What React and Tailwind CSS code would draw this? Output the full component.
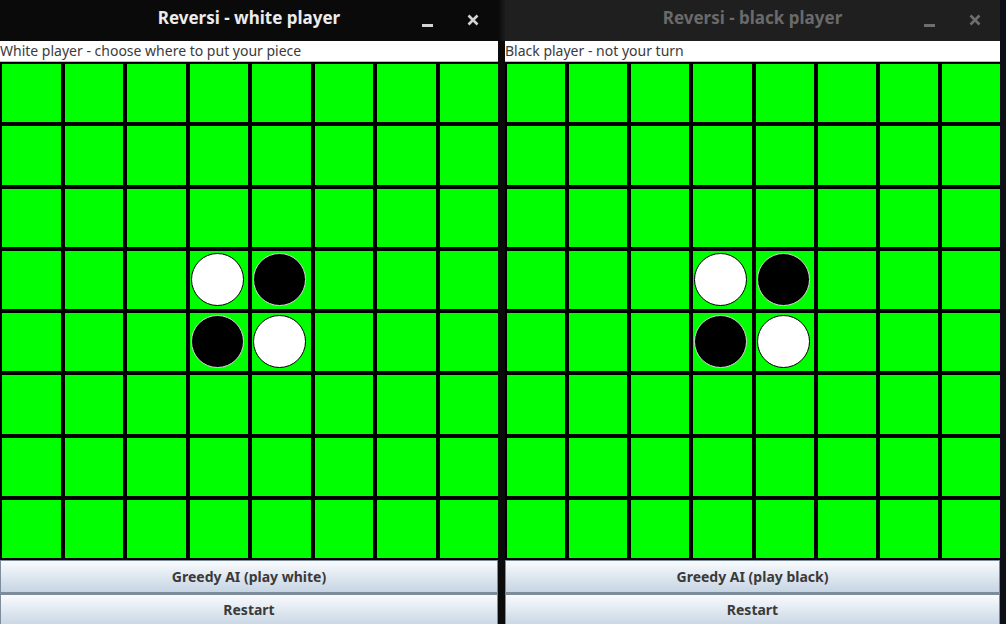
import React from 'react';

const pieces = {
  '3-3': 'white',
  '3-4': 'black',
  '4-3': 'black',
  '4-4': 'white',
};

function Cell({ piece }) {
  return (
    <div className="border-2 border-black bg-[#00ff00] flex items-start justify-start pt-[2px] pl-[1px] overflow-hidden">
      {piece === 'white' && (
        <div className="w-[53px] h-[53px] shrink-0 rounded-full bg-white border border-black" />
      )}
      {piece === 'black' && (
        <div className="w-[53px] h-[53px] shrink-0 rounded-full bg-black border border-[#d8d8d8]" />
      )}
    </div>
  );
}

function Board({ width }) {
  const cells = [];
  for (let r = 0; r < 8; r++) {
    for (let c = 0; c < 8; c++) {
      cells.push(<Cell key={r + '-' + c} piece={pieces[r + '-' + c]} />);
    }
  }
  return (
    <div
      className="grid grid-cols-8 grid-rows-8 h-[498px] bg-black shrink-0"
      style={{ width }}
    >
      {cells}
    </div>
  );
}

function WindowButtons({ active }) {
  const color = active ? '#d4d4d4' : '#6e6e6e';
  return (
    <div className="absolute right-0 top-0 h-[41px] flex items-center">
      <svg width="11" height="4" viewBox="0 0 11 4" className="mt-[10px] mr-[34px]">
        <rect x="0" y="0" width="11" height="3" fill={color} />
      </svg>
      <svg width="12" height="12" viewBox="0 0 12 12" className="mr-[19px] -mt-[1px]">
        <path d="M1.5 1.5 L10.5 10.5 M10.5 1.5 L1.5 10.5" stroke={color} strokeWidth="2.6" />
      </svg>
    </div>
  );
}

function GameWindow({ title, status, aiLabel, active, width }) {
  return (
    <div className="flex flex-col overflow-hidden shrink-0 grow-0 h-[624px]" style={{ width, minWidth: width, maxWidth: width }}>
      <div
        className={
          'relative h-[41px] shrink-0 flex items-center justify-center text-[17px] font-bold ' +
          (active ? 'bg-[#0a0a0a] text-[#ececec]' : 'bg-[#1f1f1f] text-[#6a6a6a]')
        }
      >
        <span className="-mt-[5px]">{title}</span>
        <WindowButtons active={active} />
      </div>
      <div className="h-[21px] shrink-0 bg-white border-b border-[#b8b8b8] text-[14px] leading-[20px] text-[#3b3b3b] whitespace-nowrap">
        {status}
      </div>
      <Board width={width + 2} />
      <button className="h-[34px] shrink-0 w-full bg-gradient-to-b from-[#f9fbfd] to-[#c6d4e3] border border-[#7d8c9b] border-b-2 text-[14px] font-bold text-[#3a3a3a]">
        {aiLabel}
      </button>
      <button className="h-[34px] shrink-0 w-full bg-gradient-to-b from-[#f9fbfd] to-[#c6d4e3] border border-[#7d8c9b] text-[14px] font-bold text-[#3a3a3a] pb-[4px]">
        Restart
      </button>
    </div>
  );
}

export default function App() {
  return (
    <div className="w-[1006px] h-[624px] flex bg-[#0d1117] overflow-hidden font-['Noto_Sans',sans-serif]">
      <GameWindow
        title="Reversi - white player"
        status="White player - choose where to put your piece"
        aiLabel="Greedy AI (play white)"
        active
        width={498}
      />
      <div className="w-[7px] shrink-0 h-full bg-[#0b0b0b] flex flex-col">
        <div className="h-[41px] bg-gradient-to-r from-[#0a0a0a] to-[#1c1c1c]" />
      </div>
      <GameWindow
        title="Reversi - black player"
        status="Black player - not your turn"
        aiLabel="Greedy AI (play black)"
        active={false}
        width={495}
      />
      <div className="w-[6px] shrink-0 h-full bg-[#0d1117]" />
    </div>
  );
}
